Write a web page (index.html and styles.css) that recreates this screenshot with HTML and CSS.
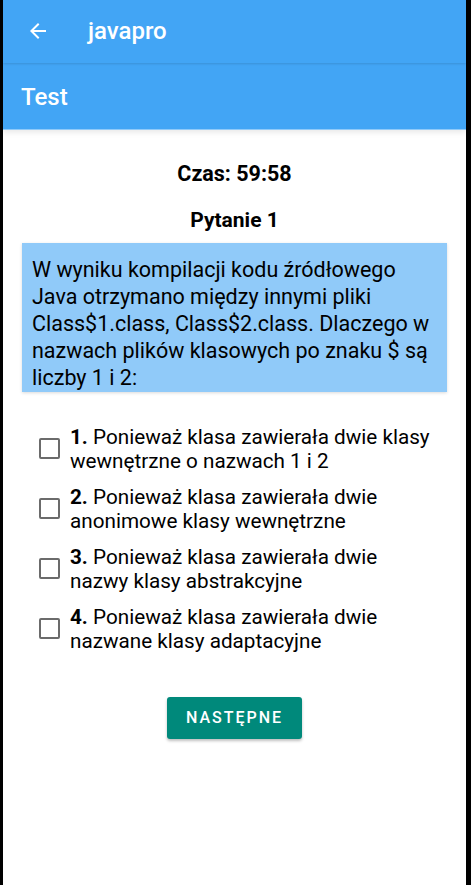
FILE: index.html
```html
<!DOCTYPE html>
<html lang="pl">
<head>
<meta charset="utf-8">
<link rel="stylesheet" href="styles.css">
</head>
<body>
<div class="screen">
  <header class="appbar">
    <svg class="back" width="24" height="24" viewBox="0 0 24 24"><path d="M20 11H7.83l5.59-5.59L12 4l-8 8 8 8 1.41-1.41L7.83 13H20v-2z" fill="#fff"/></svg>
    <span class="app-title">javapro</span>
  </header>
  <div class="subbar"><span class="sub-title">Test</span></div>
  <main class="content">
    <div class="timer">Czas: 59:58</div>
    <div class="qnum">Pytanie 1</div>
    <div class="question">W wyniku kompilacji kodu źródłowego Java otrzymano między innymi pliki Class$1.class, Class$2.class. Dlaczego w nazwach plików klasowych po znaku $ są liczby 1 i 2:</div>
    <ul class="answers">
      <li class="answer"><span class="box"></span><span class="atext"><b>1.</b> Ponieważ klasa zawierała dwie klasy wewnętrzne o nazwach 1 i 2</span></li>
      <li class="answer"><span class="box"></span><span class="atext"><b>2.</b> Ponieważ klasa zawierała dwie anonimowe klasy wewnętrzne</span></li>
      <li class="answer"><span class="box"></span><span class="atext"><b>3.</b> Ponieważ klasa zawierała dwie nazwy klasy abstrakcyjne</span></li>
      <li class="answer"><span class="box"></span><span class="atext"><b>4.</b> Ponieważ klasa zawierała dwie nazwane klasy adaptacyjne</span></li>
    </ul>
    <div class="actions"><button class="next">NASTĘPNE</button></div>
  </main>
</div>
</body>
</html>
```
FILE: styles.css
```css
html, body {
  margin: 0;
  padding: 0;
  background: #000;
  height: 885px;
  overflow: hidden;
}
.screen {
  margin: 0 5px 0 3px;
  height: 885px;
  background: #fff;
  font-family: Roboto, "Noto Sans", sans-serif;
  color: #000;
  display: flex;
  flex-direction: column;
}
.appbar {
  height: 63px;
  flex: none;
  background: #42a5f5;
  display: flex;
  align-items: center;
  box-shadow: 0 1px 2px rgba(0,0,0,0.12);
  position: relative;
  z-index: 2;
}
.back {
  margin-left: 23px;
  margin-top: -2px;
}
.app-title {
  margin-left: 38px;
  color: #fff;
  font-size: 24px;
  font-weight: 500;
  margin-top: -1px;
}
.subbar {
  height: 66px;
  flex: none;
  background: #42a5f5;
  display: flex;
  align-items: center;
  border-bottom: 1px solid #90caf9;
  box-shadow: 0 2px 6px rgba(0,0,0,0.1);
  position: relative;
  z-index: 1;
}
.sub-title {
  margin-left: 18px;
  color: #fff;
  font-size: 24px;
  font-weight: 500;
  margin-top: 2px;
}
.content {
  display: flex;
  flex-direction: column;
  align-items: center;
  padding: 30px 19px 0 19px;
}
.timer, .qnum {
  font-size: 21.5px;
  font-weight: 700;
  line-height: 26px;
}
.timer { margin-top: 1px; }
.qnum { margin-top: 20px; font-size: 21px; }
.question {
  align-self: stretch;
  margin-top: 10px;
  background: #90caf9;
  font-size: 21.5px;
  line-height: 27px;
  padding: 13px 10px 1px 10px;
  box-shadow: 0 1px 3px rgba(0,0,0,0.15);
}
.answers {
  list-style: none;
  margin: 33px 0 0 0;
  padding: 0 10px 0 17px;
  align-self: stretch;
  display: flex;
  flex-direction: column;
  gap: 11.4px;
}
.answer {
  display: flex;
  align-items: center;
  gap: 10px;
}
.box {
  flex: none;
  width: 17px;
  height: 17px;
  border: 2px solid #6b6b6b;
  border-radius: 2px;
  margin-top: -1px;
}
.atext {
  font-size: 20.7px;
  line-height: 24.3px;
}
.atext b { font-weight: 700; }
.actions {
  margin-top: 43px;
}
.next {
  background: #00897b;
  color: #fff;
  border: none;
  border-radius: 3px;
  width: 135px;
  height: 42px;
  font-family: Roboto, sans-serif;
  font-size: 16px;
  font-weight: 500;
  letter-spacing: 2px;
  box-shadow: 0 2px 3px rgba(0,0,0,0.25);
  padding: 0;
}
```
